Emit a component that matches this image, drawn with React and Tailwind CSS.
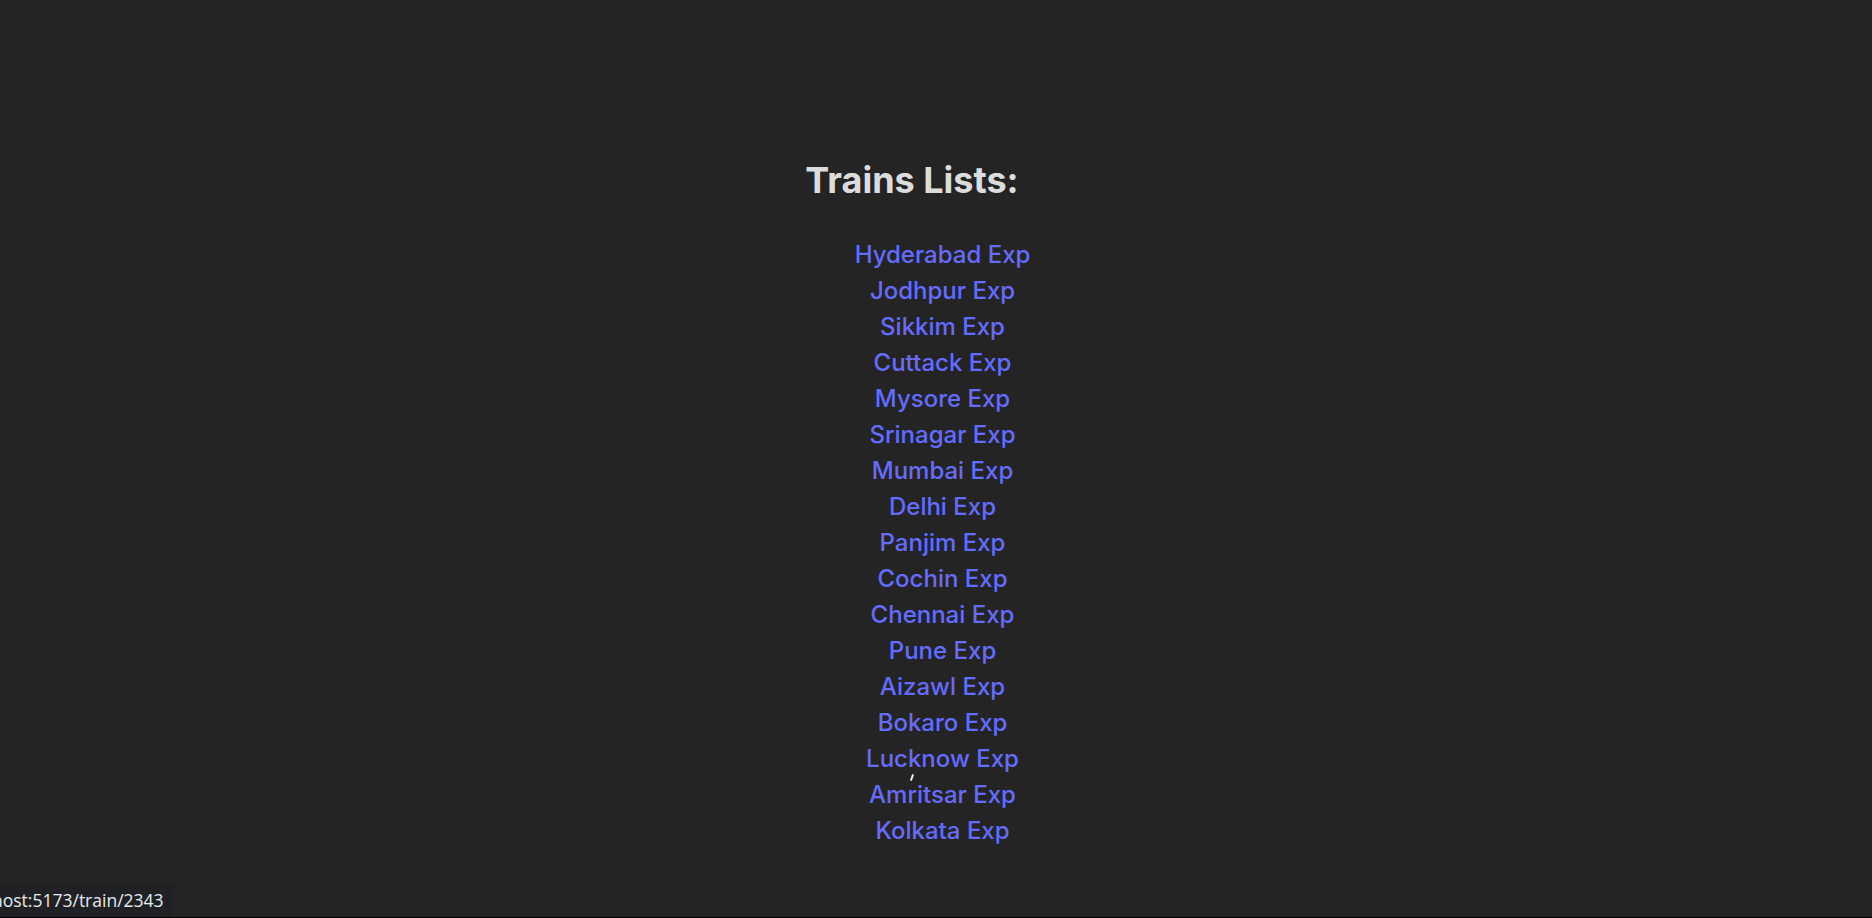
import React from "react";

const trains = [
  "Hyderabad Exp",
  "Jodhpur Exp",
  "Sikkim Exp",
  "Cuttack Exp",
  "Mysore Exp",
  "Srinagar Exp",
  "Mumbai Exp",
  "Delhi Exp",
  "Panjim Exp",
  "Cochin Exp",
  "Chennai Exp",
  "Pune Exp",
  "Aizawl Exp",
  "Bokaro Exp",
  "Lucknow Exp",
  "Amritsar Exp",
  "Kolkata Exp",
];

export default function App() {
  return (
    <div
      className="relative h-[918px] w-full overflow-hidden bg-[#242424] text-[rgba(255,255,255,0.87)]"
      style={{ fontFamily: "Inter, 'Liberation Sans', sans-serif" }}
    >
      <div className="flex flex-col items-center pt-[153px]">
        <h2 className="pr-[48px] text-[36px] font-bold leading-[54px]">Trains Lists:</h2>
        <ul className="mt-[30px] flex flex-col items-center pl-[13px]">
          {trains.map((t) => (
            <li key={t} className="text-[24px] leading-[36px]">
              <a href="#" className="font-medium text-[#646cff]">
                {t}
              </a>
            </li>
          ))}
        </ul>
      </div>
      <div className="absolute left-[911px] top-[774px] h-[7px] w-[2px] rotate-[20deg] rounded-full bg-[#e8e8f0]" />
      <div
        className="absolute bottom-[1px] left-0 flex h-[33px] w-[173px] items-center overflow-hidden rounded-tr-[4px] bg-[#202124] text-[17.5px] text-[#e8eaed]"
        style={{ fontFamily: "'Open Sans', 'Noto Sans', sans-serif" }}
      >
        <span className="-ml-[8px] whitespace-nowrap">host:5173/train/2343</span>
      </div>
      <div className="absolute bottom-0 left-0 h-[1px] w-full bg-black" />
    </div>
  );
}
